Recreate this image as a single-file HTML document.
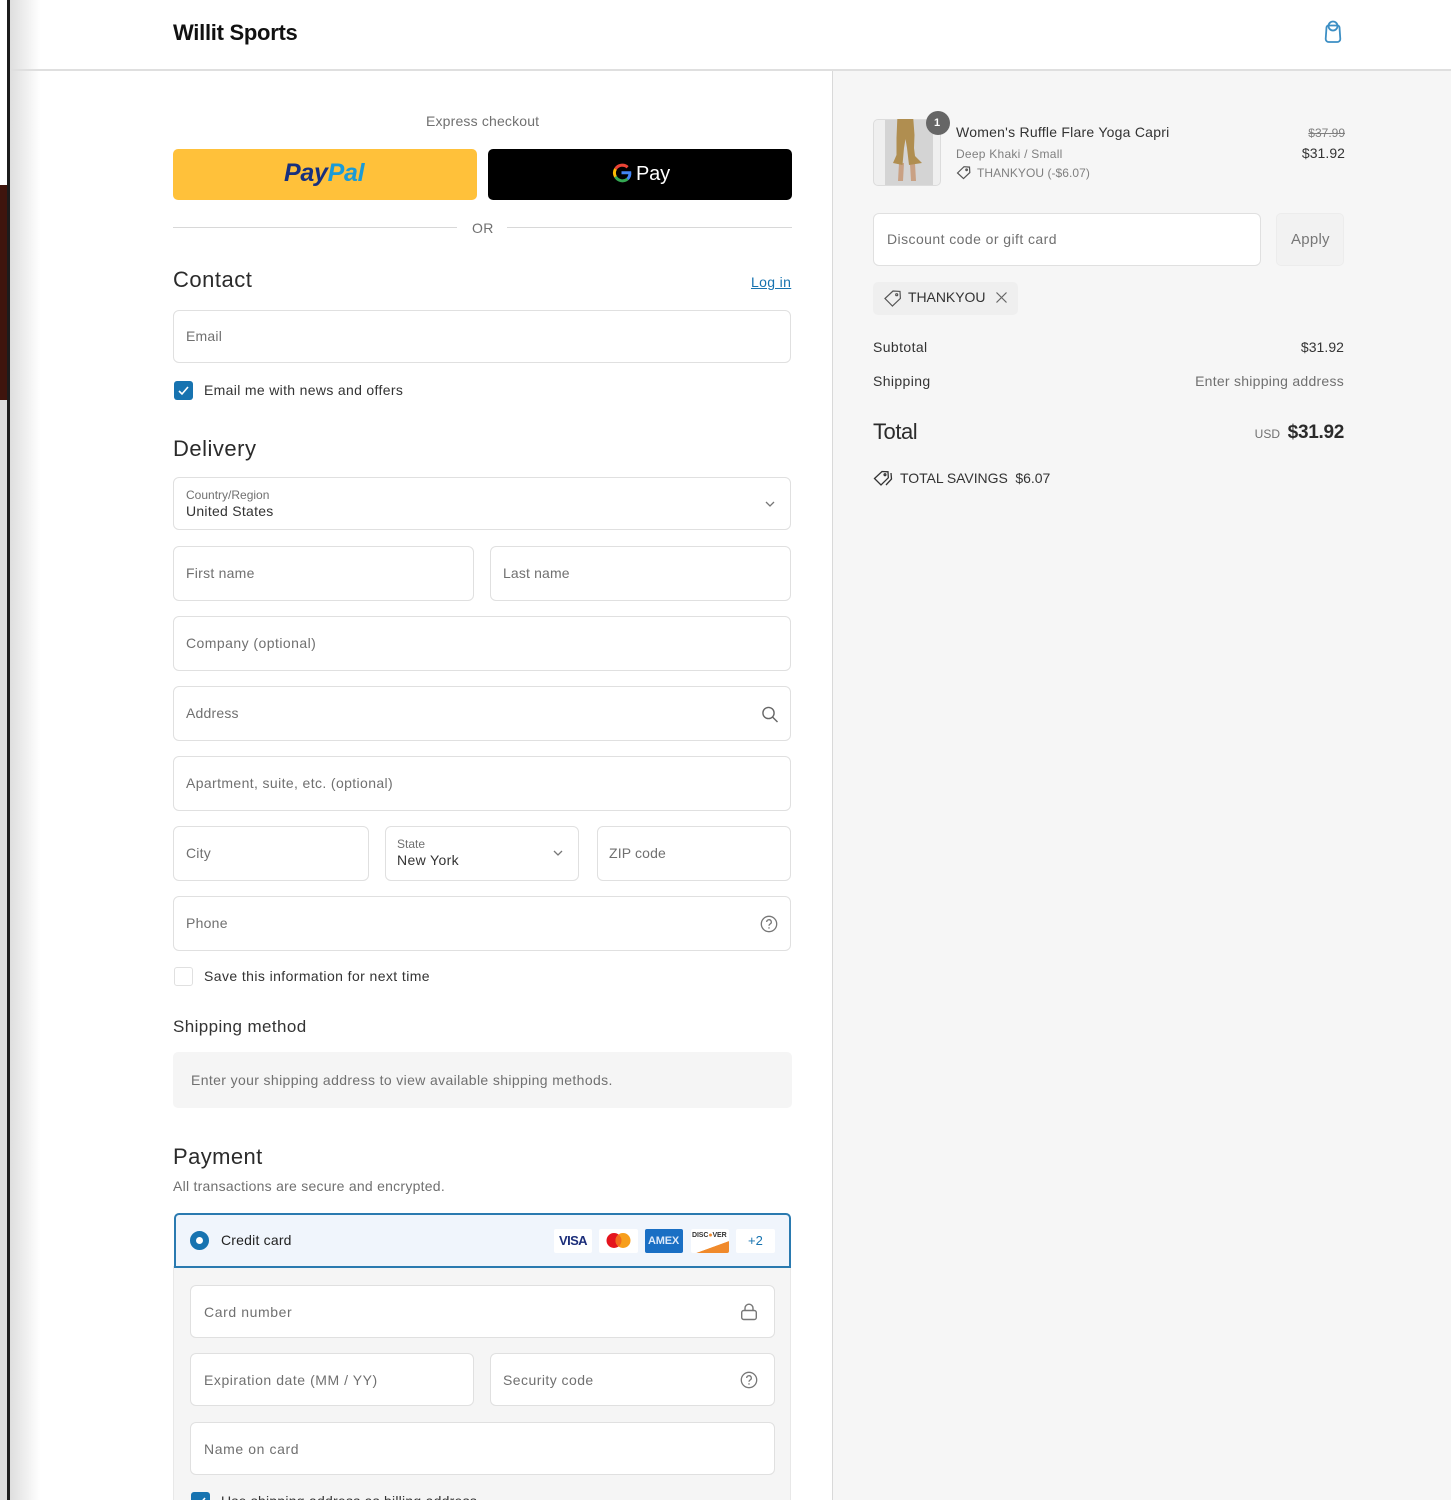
<!DOCTYPE html>
<html lang="en"><head><meta charset="utf-8"><title>Checkout - Willit Sports</title>
<style>
html,body{margin:0;padding:0;background:#fff}
#p{position:relative;width:1451px;height:1500px;overflow:hidden;background:#fff;font-family:"Liberation Sans",sans-serif;color:#333}
.t{position:absolute;white-space:nowrap;line-height:20px;font-size:14px;letter-spacing:.35px;color:#707070;filter:blur(.25px)}
.d{color:#333}
.h{font-size:22px;color:#2b2b2b;letter-spacing:.4px;line-height:28px}
.b{position:absolute;box-sizing:border-box;background:#fff;border:1px solid #e0e0e0;border-radius:6px}
.a{position:absolute}
svg{position:absolute;overflow:visible}
</style></head><body><div id="p">
<!-- left strip -->
<div class="a" style="left:0;top:0;width:8px;height:185px;background:#fff"></div>
<div class="a" style="left:0;top:185px;width:8px;height:215px;background:#3f150d"></div>
<div class="a" style="left:0;top:400px;width:8px;height:1100px;background:#dcdcdc"></div>
<div class="a" style="left:7px;top:0;width:3px;height:1500px;background:#1c1c1c"></div>
<div class="a" style="left:10px;top:0;width:30px;height:1500px;background:linear-gradient(90deg,#dedede,#fff)"></div>
<!-- header / panels -->
<div class="a" style="left:10px;top:69px;width:1441px;height:2px;background:#dfdfdf"></div>
<div class="a" style="left:832px;top:71px;width:619px;height:1429px;background:#f6f6f6;border-left:1px solid #d9d9d9"></div>
<div class="t" style="left:173px;top:19px;font-size:22px;line-height:28px;font-weight:bold;color:#111;letter-spacing:-.28px">Willit Sports</div>
<svg style="left:1322px;top:20px" width="22" height="24" viewBox="0 0 22 24" fill="none" stroke="#3d8fc4" stroke-width="1.8"><path d="M6.500 5.500h9a2 2 0 0 1 2 1.800l.8 11.700a3 3 0 0 1-3 3h-8.600a3 3 0 0 1-3-3l.8-11.700a2 2 0 0 1 2-1.800z"/><circle cx="11" cy="6" r="4.500"/></svg>

<!-- express -->
<div class="t" style="left:426px;top:111px;letter-spacing:.17px">Express checkout</div>
<div class="a" style="left:173px;top:149px;width:304px;height:51px;background:#ffc13a;border-radius:5px"></div>
<div class="t" style="left:284px;top:158px;font-size:25px;line-height:30px;font-weight:bold;font-style:italic;color:#17307e;letter-spacing:-.3px;filter:none">Pay<span style="color:#1a9bd7">Pal</span></div>
<div class="a" style="left:488px;top:149px;width:304px;height:51px;background:#000;border-radius:5px"></div>
<svg style="left:611px;top:163px" width="21" height="20" viewBox="0 0 21 20" fill="none" stroke-width="3"><path d="M16.600 4.200A8 8 0 0 0 4.500 6" stroke="#ea4335"/><path d="M4.500 6a8 8 0 0 0 0 7.800" stroke="#fbbc04"/><path d="M4.500 13.800a8 8 0 0 0 12 2.200" stroke="#34a853"/><path d="M16.500 16a7.500 7.500 0 0 0 2.300-6.200H10.500" stroke="#4285f4"/></svg>
<div class="t" style="left:636px;top:159px;font-size:20px;line-height:30px;color:#fff;letter-spacing:-.2px">Pay</div>
<div class="a" style="left:173px;top:227px;width:284px;height:1px;background:#d8d8d8"></div>
<div class="a" style="left:507px;top:227px;width:285px;height:1px;background:#d8d8d8"></div>
<div class="t" style="left:472px;top:218px">OR</div>

<!-- contact -->
<div class="t h" style="left:173px;top:266px;letter-spacing:.5px">Contact</div>
<div class="t" style="left:751px;top:272px;color:#1773b0;text-decoration:underline">Log in</div>
<div class="b" style="left:173px;top:310px;width:618px;height:53px"></div>
<div class="t" style="left:186px;top:326px;letter-spacing:.2px">Email</div>
<div class="a" style="left:174px;top:381px;width:19px;height:19px;background:#1773b0;border-radius:3px"></div>
<svg style="left:174px;top:381px" width="19" height="19" fill="none" stroke="#fff" stroke-width="1.6"><path d="M5 10l3 3 6-7"/></svg>
<div class="t d" style="left:204px;top:380px;letter-spacing:.33px">Email me with news and offers</div>

<!-- delivery -->
<div class="t h" style="left:173px;top:435px;letter-spacing:.5px">Delivery</div>
<div class="b" style="left:173px;top:477px;width:618px;height:53px"></div>
<div class="t" style="left:186px;top:485px;font-size:12px;letter-spacing:0">Country/Region</div>
<div class="t d" style="left:186px;top:501px;letter-spacing:.27px">United States</div>
<svg style="left:764px;top:500px" width="12" height="9" fill="none" stroke="#777" stroke-width="1.3"><path d="M2 2l4 4 4-4"/></svg>
<div class="b" style="left:173px;top:546px;width:301px;height:55px"></div>
<div class="t" style="left:186px;top:563px;letter-spacing:.25px">First name</div>
<div class="b" style="left:490px;top:546px;width:301px;height:55px"></div>
<div class="t" style="left:503px;top:563px;letter-spacing:.15px">Last name</div>
<div class="b" style="left:173px;top:616px;width:618px;height:55px"></div>
<div class="t" style="left:186px;top:633px;letter-spacing:.45px">Company (optional)</div>
<div class="b" style="left:173px;top:686px;width:618px;height:55px"></div>
<div class="t" style="left:186px;top:703px;letter-spacing:.2px">Address</div>
<svg style="left:760px;top:705px" width="18" height="18" fill="none" stroke="#666" stroke-width="1.4"><circle cx="8.500" cy="8" r="5.600"/><path d="M12.500 12l5 5"/></svg>
<div class="b" style="left:173px;top:756px;width:618px;height:55px"></div>
<div class="t" style="left:186px;top:773px;letter-spacing:.38px">Apartment, suite, etc. (optional)</div>
<div class="b" style="left:173px;top:826px;width:196px;height:55px"></div>
<div class="t" style="left:186px;top:843px;letter-spacing:.2px">City</div>
<div class="b" style="left:385px;top:826px;width:194px;height:55px"></div>
<div class="t" style="left:397px;top:834px;font-size:12px;letter-spacing:0">State</div>
<div class="t d" style="left:397px;top:850px">New York</div>
<svg style="left:552px;top:849px" width="12" height="9" fill="none" stroke="#777" stroke-width="1.3"><path d="M2 2l4 4 4-4"/></svg>
<div class="b" style="left:597px;top:826px;width:194px;height:55px"></div>
<div class="t" style="left:609px;top:843px;letter-spacing:.15px">ZIP code</div>
<div class="b" style="left:173px;top:896px;width:618px;height:55px"></div>
<div class="t" style="left:186px;top:913px;letter-spacing:.25px">Phone</div>
<svg style="left:760px;top:915px" width="18" height="18" fill="none" stroke="#777" stroke-width="1.3"><circle cx="9" cy="9" r="7.700"/><path d="M6.700 7a2.300 2.300 0 1 1 3.400 2c-.8.500-1.100.9-1.100 1.700M9 12.200v1.400"/></svg>
<div class="b" style="left:174px;top:967px;width:19px;height:19px;border-radius:3px"></div>
<div class="t d" style="left:204px;top:966px;letter-spacing:.41px">Save this information for next time</div>

<div class="t" style="left:173px;top:1016px;font-size:17px;line-height:22px;color:#333;letter-spacing:.4px">Shipping method</div>
<div class="a" style="left:173px;top:1052px;width:619px;height:56px;background:#f5f5f5;border-radius:5px"></div>
<div class="t" style="left:191px;top:1070px;letter-spacing:.37px">Enter your shipping address to view available shipping methods.</div>

<!-- payment -->
<div class="t h" style="left:173px;top:1143px">Payment</div>
<div class="t" style="left:173px;top:1176px;letter-spacing:.25px">All transactions are secure and encrypted.</div>
<div class="a" style="left:173px;top:1266px;width:618px;height:240px;box-sizing:border-box;background:#f5f5f5;border:1px solid #e8e8e8;border-top:0"></div>
<div class="a" style="left:174px;top:1213px;width:617px;height:55px;box-sizing:border-box;background:#f0f5fc;border:2px solid #2a7ab0;border-radius:5px 5px 0 0"></div>
<div class="a" style="left:190px;top:1231px;width:19px;height:19px;box-sizing:border-box;border-radius:50%;border:6px solid #1773b0;background:#fff"></div>
<div class="t d" style="left:221px;top:1230px;color:#222;letter-spacing:.2px">Credit card</div>
<div class="a" style="left:554px;top:1229px;width:38px;height:24px;background:#fff;border-radius:2px"></div>
<div class="t" style="left:559px;top:1231px;font-size:13px;font-weight:bold;color:#1c2e7a;letter-spacing:-.6px;filter:none">VISA</div>
<div class="a" style="left:599px;top:1229px;width:39px;height:24px;background:#fff;border-radius:2px"></div>
<svg style="left:605px;top:1232px" width="27" height="17"><circle cx="9" cy="8.500" r="7.500" fill="#e4141d"/><circle cx="18" cy="8.500" r="7.500" fill="#f79e1b"/><path d="M13.500 2.500a7.500 7.500 0 0 1 0 12a7.500 7.500 0 0 1 0-12z" fill="#f26a1c"/></svg>
<div class="a" style="left:645px;top:1229px;width:38px;height:24px;background:#1a6fc4;border-radius:2px"></div>
<div class="t" style="left:648px;top:1231px;font-size:11px;font-weight:bold;color:#dce9fa;letter-spacing:-.2px;filter:none">AMEX</div>
<div class="a" style="left:691px;top:1229px;width:38px;height:24px;background:linear-gradient(160deg,#fff 68%,#f08a2c 69%);border-radius:2px"></div>
<div class="t" style="left:692px;top:1226px;font-size:7px;font-weight:bold;color:#333;letter-spacing:-.1px;line-height:20px;filter:none">DISC<span style="color:#f08a2c">●</span>VER</div>
<div class="a" style="left:736px;top:1229px;width:39px;height:24px;background:#fff;border-radius:2px"></div>
<div class="t" style="left:748px;top:1231px;font-size:13px;color:#1773b0;letter-spacing:0">+2</div>

<div class="b" style="left:190px;top:1285px;width:585px;height:53px"></div>
<div class="t" style="left:204px;top:1302px;letter-spacing:.6px">Card number</div>
<svg style="left:740px;top:1303px" width="18" height="18" fill="none" stroke="#777" stroke-width="1.400"><rect x="1.700" y="7.500" width="14.600" height="9" rx="2"/><path d="M5 7.500V5.200a4 4 0 0 1 8 0v2.300"/></svg>
<div class="b" style="left:190px;top:1353px;width:284px;height:53px"></div>
<div class="t" style="left:204px;top:1370px;letter-spacing:.55px">Expiration date (MM / YY)</div>
<div class="b" style="left:490px;top:1353px;width:285px;height:53px"></div>
<div class="t" style="left:503px;top:1370px;letter-spacing:.45px">Security code</div>
<svg style="left:740px;top:1371px" width="18" height="18" fill="none" stroke="#777" stroke-width="1.300"><circle cx="9" cy="9" r="7.700"/><path d="M6.700 7a2.300 2.300 0 1 1 3.400 2c-.8.500-1.100.9-1.100 1.700M9 12.200v1.400"/></svg>
<div class="b" style="left:190px;top:1422px;width:585px;height:53px"></div>
<div class="t" style="left:204px;top:1439px;letter-spacing:.6px">Name on card</div>
<div class="a" style="left:191px;top:1492px;width:19px;height:19px;background:#1773b0;border-radius:3px"></div>
<svg style="left:191px;top:1492px" width="19" height="19" fill="none" stroke="#fff" stroke-width="1.600"><path d="M5 10l3 3 6-7"/></svg>
<div class="t d" style="left:221px;top:1491px;letter-spacing:.24px">Use shipping address as billing address</div>

<!-- summary -->
<div class="a" style="left:873px;top:119px;width:68px;height:67px;box-sizing:border-box;background:#efefef;border:1px solid #dcdcdc;border-radius:5px;overflow:hidden">
<div class="a" style="left:11px;top:0;width:48px;height:67px;background:#d4d4d4"></div></div>
<svg style="left:873px;top:119px" width="68" height="67"><path d="M26 44L31 44L30 62L25 62ZM37 45L42 44L43 62L38 62Z" fill="#c9a184"/><path d="M24.300 0L40.300 0L41.500 16L41 29L42 37L49 44L36 46L34 29L32.500 20L31 29L29.500 46L20 44L23.500 36L23.500 19Z" fill="#b08e50"/></svg>
<div class="a" style="left:926px;top:111px;width:24px;height:24px;background:#666;border-radius:50%"></div>
<div class="t" style="left:934px;top:113px;font-size:11px;font-weight:bold;color:#fff;letter-spacing:0">1</div>
<div class="t d" style="left:956px;top:122px;letter-spacing:.24px">Women's Ruffle Flare Yoga Capri</div>
<div class="t" style="left:956px;top:144px;font-size:12px;letter-spacing:.25px;color:#808080">Deep Khaki / Small</div>
<svg style="left:956px;top:165px" width="16" height="15" fill="none" stroke="#555" stroke-width="1.200"><path d="M1.500 8L8 1.700l5.500.4.300 5.500L7.500 13.600z"/><circle cx="10.600" cy="4.800" r=".8"/></svg>
<div class="t" style="left:977px;top:163px;font-size:12px;letter-spacing:.05px;color:#808080">THANKYOU (-$6.07)</div>
<div class="t" style="right:106px;top:123px;font-size:12px;letter-spacing:0;color:#808080;text-decoration:line-through">$37.99</div>
<div class="t d" style="right:106px;top:143px;letter-spacing:.05px">$31.92</div>

<div class="b" style="left:873px;top:213px;width:388px;height:53px"></div>
<div class="t" style="left:887px;top:229px;letter-spacing:.43px">Discount code or gift card</div>
<div class="a" style="left:1276px;top:213px;width:68px;height:53px;box-sizing:border-box;background:#f2f2f2;border:1px solid #ececec;border-radius:5px"></div>
<div class="t" style="left:1291px;top:230px;font-size:15px;letter-spacing:.25px;color:#777">Apply</div>

<div class="a" style="left:873px;top:282px;width:145px;height:33px;background:#efefef;border-radius:5px"></div>
<svg style="left:883px;top:289px" width="20" height="18" fill="none" stroke="#555" stroke-width="1.200"><path d="M2 9.500L10 2l7 .4.400 7-8 7.600z"/><circle cx="13.700" cy="5.700" r="1"/></svg>
<div class="t d" style="left:908px;top:287px;letter-spacing:-.05px">THANKYOU</div>
<svg style="left:995px;top:291px" width="13" height="13" fill="none" stroke="#666" stroke-width="1.200"><path d="M1.500 1.500l10 10M11.500 1.500l-10 10"/></svg>

<div class="t d" style="left:873px;top:337px;letter-spacing:.4px">Subtotal</div>
<div class="t d" style="right:107px;top:337px;letter-spacing:.05px">$31.92</div>
<div class="t d" style="left:873px;top:371px;letter-spacing:.38px">Shipping</div>
<div class="t" style="right:107px;top:371px;letter-spacing:.26px">Enter shipping address</div>
<div class="t h" style="left:873px;top:418px;letter-spacing:-.45px">Total</div>
<div class="t" style="right:171px;top:424px;font-size:12px;letter-spacing:0">USD</div>
<div class="t h" style="right:107px;top:419px;font-size:19px;font-weight:bold;letter-spacing:-.3px;filter:none">$31.92</div>
<svg style="left:873px;top:469px" width="20" height="18" fill="none" stroke="#333" stroke-width="1.300"><path d="M1.500 9.500L9 2.500l6 .3.300 6L8 16z"/><path d="M13 16l5.500-6-.5-6"/><circle cx="12" cy="5.700" r=".9"/></svg>
<div class="t d" style="left:900px;top:468px;letter-spacing:-.05px">TOTAL SAVINGS &nbsp;$6.07</div>
</div></body></html>
